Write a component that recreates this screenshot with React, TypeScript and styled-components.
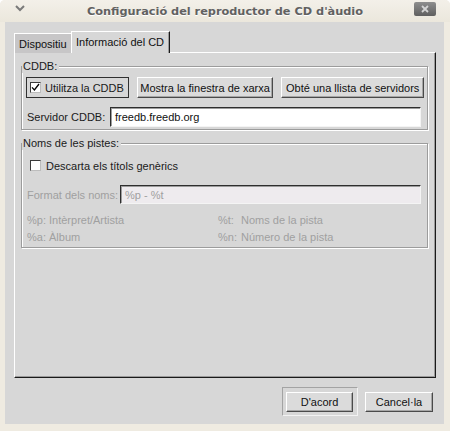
import React from 'react'
import styled, { createGlobalStyle } from 'styled-components'

const GlobalStyle = createGlobalStyle`
  html, body {
    margin: 0;
    padding: 0;
    background: #ffffff;
  }
  body {
    font-family: "Liberation Sans", Arial, sans-serif;
    font-size: 11px;
    color: #1a1a1a;
  }
`

const Window = styled.div`
  width: 450px;
  height: 431px;
  background: #efebe1;
  border-radius: 5px 5px 0 0;
  display: flex;
  flex-direction: column;
  box-sizing: border-box;
`

const TitleBar = styled.div`
  height: 22px;
  flex: none;
  display: flex;
  align-items: center;
  background: linear-gradient(#f3f0e9, #ebe7dc);
  border-radius: 5px 5px 0 0;
`

const TitleSide = styled.div<{ $align: string }>`
  width: 36px;
  height: 22px;
  display: flex;
  align-items: center;
  justify-content: ${({ $align }) => $align};
  padding: ${({ $align }) => ($align === 'flex-start' ? '0 0 0 15px' : '0 14px 0 0')};
  box-sizing: border-box;
`

const Title = styled.div`
  flex: 1;
  text-align: center;
  font-family: "DejaVu Sans", sans-serif;
  font-weight: bold;
  font-size: 11.3px;
  color: #616161;
  text-shadow: 0 1px 0 #ffffff;
`

const CloseButton = styled.div`
  width: 22px;
  height: 14px;
  margin-top: -5px;
  border-radius: 2px;
  background: linear-gradient(#8e8e8e, #5f5f5f);
  display: flex;
  align-items: center;
  justify-content: center;
`

const Body = styled.div`
  flex: none;
  height: 402px;
  margin: 0 6px 0 5px;
  background: #d7d7d7;
  padding: 10px 8px 8px 9px;
  box-sizing: border-box;
  display: flex;
  flex-direction: column;
`

const TabRow = styled.div`
  display: flex;
  align-items: flex-end;
  height: 21px;
  position: relative;
  z-index: 1;
  margin-bottom: -1px;
`

const Tab = styled.div<{ $active?: boolean; $w: number }>`
  width: ${({ $w }) => $w}px;
  height: ${({ $active }) => ($active ? 22 : 20)}px;
  box-sizing: border-box;
  padding: ${({ $active }) => ($active ? '0 0 1px 4px' : '0 0 0 4px')};
  display: flex;
  align-items: center;
  white-space: nowrap;
  overflow: hidden;
  background: ${({ $active }) => ($active ? '#d7d7d7' : '#c7c6c7')};
  border-top: 1px solid #ffffff;
  border-left: 1px solid #ffffff;
  border-right: ${({ $active }) => ($active ? '1px solid #1a1a1a' : 'none')};
  box-shadow: ${({ $active }) => ($active ? 'inset -1px 0 0 #9a9a9a' : 'none')};
  color: #111;
`

const Panel = styled.div`
  flex: 1;
  box-sizing: border-box;
  border-top: 1px solid #ffffff;
  border-left: 1px solid #ffffff;
  border-right: 1px solid #1a1a1a;
  border-bottom: 1px solid #1a1a1a;
  box-shadow: inset -1px -1px 0 #9a9a9a;
  padding: 13px 6px 0 6px;
  display: flex;
  flex-direction: column;
`

const Frame = styled.div<{ $gap?: number }>`
  position: relative;
  border: 1px solid #9c9c9c;
  box-shadow: inset 1px 1px 0 #ffffff, 1px 1px 0 #ffffff;
  margin-top: ${({ $gap }) => $gap ?? 0}px;
  margin-right: 1px;
  padding: 10px 3px 2px 4px;
  display: flex;
  flex-direction: column;
`

const FrameLabel = styled.div`
  position: absolute;
  top: -7px;
  left: 0;
  padding: 0 2px 0 1px;
  line-height: 13px;
  background: #d7d7d7;
  color: #1a1a1a;
`

const ButtonRow = styled.div`
  display: flex;
  gap: 8px;
`

const Button = styled.div<{ $w: number; $h?: number }>`
  width: ${({ $w }) => $w}px;
  height: ${({ $h }) => $h ?? 21}px;
  box-sizing: border-box;
  background: #dbdbdb;
  border-top: 1px solid #ffffff;
  border-left: 1px solid #ffffff;
  border-right: 1px solid #4a4a4a;
  border-bottom: 1px solid #4a4a4a;
  box-shadow: inset -1px -1px 0 #a6a6a6;
  display: flex;
  align-items: center;
  justify-content: center;
  color: #111;
  white-space: nowrap;
`

const ToggleCheck = styled.div<{ $w: number }>`
  width: ${({ $w }) => $w}px;
  height: 21px;
  box-sizing: border-box;
  border: 1px solid #303030;
  display: flex;
  align-items: center;
  padding-left: 3px;
  gap: 4px;
  white-space: nowrap;
`

const CheckBox = styled.div`
  width: 11px;
  height: 11px;
  box-sizing: border-box;
  background: #ffffff;
  border-top: 1px solid #3a3a3a;
  border-left: 1px solid #3a3a3a;
  border-right: 1px solid #bdbdbd;
  border-bottom: 1px solid #bdbdbd;
  display: flex;
  align-items: center;
  justify-content: center;
  flex: none;
`

const FieldRow = styled.div<{ $top: number; $h: number }>`
  display: flex;
  align-items: center;
  margin-top: ${({ $top }) => $top}px;
  height: ${({ $h }) => $h}px;
  padding-left: 1px;
`

const FieldLabel = styled.div<{ $w: number; $disabled?: boolean }>`
  width: ${({ $w }) => $w}px;
  flex: none;
  color: ${({ $disabled }) => ($disabled ? '#a0a0a0' : '#1a1a1a')};
  white-space: nowrap;
`

const Entry = styled.div<{ $disabled?: boolean }>`
  flex: 1;
  height: 100%;
  box-sizing: border-box;
  background: ${({ $disabled }) => ($disabled ? '#eeebee' : '#ffffff')};
  border-top: 1px solid #2e2e2e;
  border-left: 1px solid #2e2e2e;
  border-right: 1px solid #f4f4f4;
  border-bottom: 1px solid #f4f4f4;
  box-shadow: inset 1px 1px 0 #9c9c9c;
  padding-left: 4px;
  display: flex;
  align-items: center;
  color: ${({ $disabled }) => ($disabled ? '#a0a0a0' : '#111')};
  margin-right: 3px;
`

const CheckRow = styled.div`
  display: flex;
  align-items: center;
  gap: 5px;
  height: 17px;
  margin-top: 3px;
  padding-left: 4px;
`

const Legend = styled.div`
  display: grid;
  grid-template-columns: 191px 1fr;
  grid-auto-rows: 17px;
  margin-top: 7px;
  padding-left: 1px;
  align-items: center;
  color: #a0a0a0;
`

const Key = styled.span<{ $w: number }>`
  display: inline-block;
  width: ${({ $w }) => $w}px;
`

const Footer = styled.div`
  display: flex;
  justify-content: flex-end;
  align-items: center;
  gap: 7px;
  margin-top: 9px;
  height: 29px;
  padding-right: 3px;
`

const DefaultFrame = styled.div`
  box-sizing: border-box;
  width: 76px;
  height: 29px;
  border-top: 1px solid #a3a3a3;
  border-left: 1px solid #a3a3a3;
  border-right: 1px solid #f2f2f2;
  border-bottom: 1px solid #f2f2f2;
  padding: 4px 4px 3px 3px;
  display: flex;
`

const Check = () => (
  <svg width="9" height="9" viewBox="0 0 9 9">
    <path d="M1 4.4 L3.4 7 L8 1" fill="none" stroke="#000" strokeWidth="1.3" />
  </svg>
)

export default function App() {
  return (
    <>
      <GlobalStyle />
      <Window>
        <TitleBar>
          <TitleSide $align="flex-start">
            <svg width="10" height="7" viewBox="0 0 10 7" style={{ marginTop: -6 }}>
              <path d="M1 1 L5 5 L9 1" fill="none" stroke="#7a7a7a" strokeWidth="2" />
            </svg>
          </TitleSide>
          <Title>Configuració del reproductor de CD d'àudio</Title>
          <TitleSide $align="flex-end">
            <CloseButton>
              <svg width="8" height="8" viewBox="0 0 8 8">
                <path d="M1 1 L7 7 M7 1 L1 7" stroke="#d4d4d4" strokeWidth="1.8" />
              </svg>
            </CloseButton>
          </TitleSide>
        </TitleBar>
        <Body>
          <TabRow>
            <Tab $w={57}>Dispositiu</Tab>
            <Tab $w={99} $active>
              Informació del CD
            </Tab>
          </TabRow>
          <Panel>
            <Frame>
              <FrameLabel>CDDB:</FrameLabel>
              <ButtonRow>
                <ToggleCheck $w={103}>
                  <CheckBox>
                    <Check />
                  </CheckBox>
                  Utilitza la CDDB
                </ToggleCheck>
                <Button $w={137}>Mostra la finestra de xarxa</Button>
                <Button $w={143}>Obté una llista de servidors</Button>
              </ButtonRow>
              <FieldRow $top={9} $h={20}>
                <FieldLabel $w={83}>Servidor CDDB:</FieldLabel>
                <Entry>freedb.freedb.org</Entry>
              </FieldRow>
            </Frame>
            <Frame $gap={13}>
              <FrameLabel>Noms de les pistes:</FrameLabel>
              <CheckRow>
                <CheckBox />
                Descarta els títols genèrics
              </CheckRow>
              <FieldRow $top={11} $h={19}>
                <FieldLabel $w={93} $disabled>
                  Format dels noms:
                </FieldLabel>
                <Entry $disabled>%p - %t</Entry>
              </FieldRow>
              <Legend>
                <div>%p: Intèrpret/Artista</div>
                <div>
                  <Key $w={23}>%t:</Key>Noms de la pista
                </div>
                <div>%a: Àlbum</div>
                <div>
                  <Key $w={23}>%n:</Key>Número de la pista
                </div>
              </Legend>
            </Frame>
          </Panel>
          <Footer>
            <DefaultFrame>
              <Button $w={67} $h={20}>
                D'acord
              </Button>
            </DefaultFrame>
            <Button $w={68} $h={20}>
              Cancel·la
            </Button>
          </Footer>
        </Body>
      </Window>
    </>
  )
}
